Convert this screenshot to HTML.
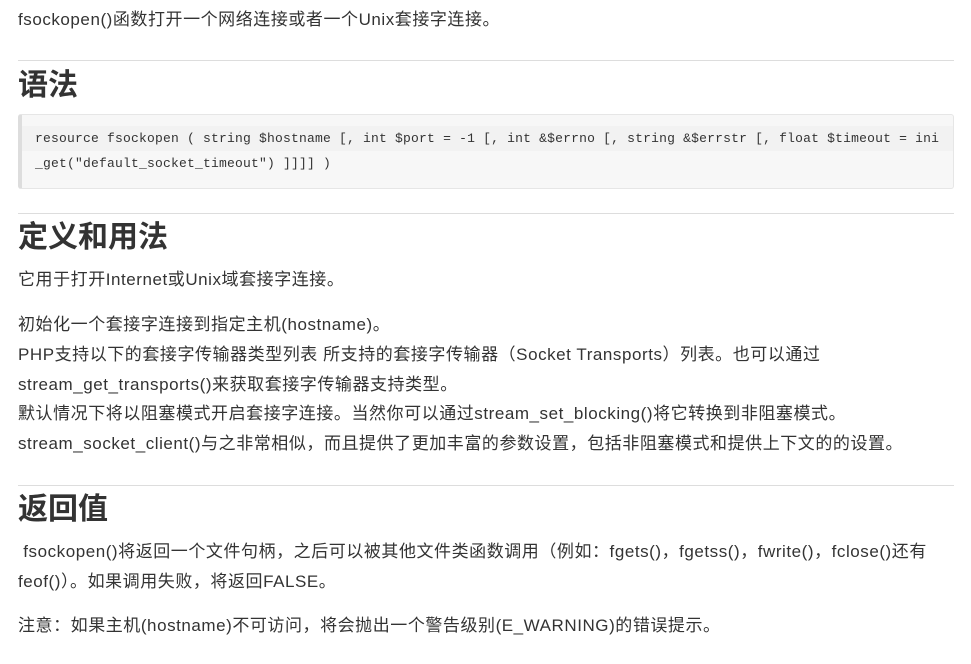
<!DOCTYPE html>
<html><head><meta charset="utf-8"><style>
body{margin:0;width:971px;height:664px;background:#fff;color:#333;font-family:"Liberation Sans","Noto Sans CJK SC",sans-serif;font-size:17px;letter-spacing:0.55px;position:relative;overflow:hidden}
.a{position:absolute;left:18px;white-space:nowrap;line-height:30px}
.hr{position:absolute;left:18px;width:936px;height:1px;background:#ddd}
h2{position:absolute;left:18px;margin:0;font-size:30px;letter-spacing:0;font-weight:bold;line-height:40px;color:#333}
.code{position:absolute;left:18px;top:114px;width:931px;height:73px;background:#f7f7f7;border-radius:3px;border:1px solid #e6e6e6;border-left:4px solid #ddd}
.ln{position:absolute;left:13px;font-family:"Liberation Mono",monospace;font-size:13px;letter-spacing:0.2px;line-height:25px;white-space:nowrap;color:#333;width:918px}
</style></head><body>
<div class="a" style="top:5px">fsockopen()函数打开一个网络连接或者一个Unix套接字连接。</div>
<div class="hr" style="top:60px"></div>
<h2 style="top:66px">语法</h2>
<div class="code">
<div class="ln" style="top:11px;background:#f2f2f2;left:0;padding-left:13px;width:918px">resource fsockopen ( string $hostname [, int $port = -1 [, int &amp;$errno [, string &amp;$errstr [, float $timeout = ini</div>
<div class="ln" style="top:36px">_get("default_socket_timeout") ]]]] )</div>
</div>
<div class="hr" style="top:213px"></div>
<h2 style="top:218px">定义和用法</h2>
<div class="a" style="top:265px">它用于打开Internet或Unix域套接字连接。</div>
<div class="a" style="top:310px">初始化一个套接字连接到指定主机(hostname)。</div>
<div class="a" style="top:340px">PHP支持以下的套接字传输器类型列表 所支持的套接字传输器（Socket Transports）列表。也可以通过</div>
<div class="a" style="top:370px">stream_get_transports()来获取套接字传输器支持类型。</div>
<div class="a" style="top:399px">默认情况下将以阻塞模式开启套接字连接。当然你可以通过stream_set_blocking()将它转换到非阻塞模式。</div>
<div class="a" style="top:429px">stream_socket_client()与之非常相似，而且提供了更加丰富的参数设置，包括非阻塞模式和提供上下文的的设置。</div>
<div class="hr" style="top:485px"></div>
<h2 style="top:490px">返回值</h2>
<div class="a" style="top:537px">&nbsp;fsockopen()将返回一个文件句柄，之后可以被其他文件类函数调用（例如：fgets()，fgetss()，fwrite()，fclose()还有</div>
<div class="a" style="top:567px">feof()）。如果调用失败，将返回FALSE。</div>
<div class="a" style="top:611px">注意：如果主机(hostname)不可访问，将会抛出一个警告级别(E_WARNING)的错误提示。</div>
</body></html>
